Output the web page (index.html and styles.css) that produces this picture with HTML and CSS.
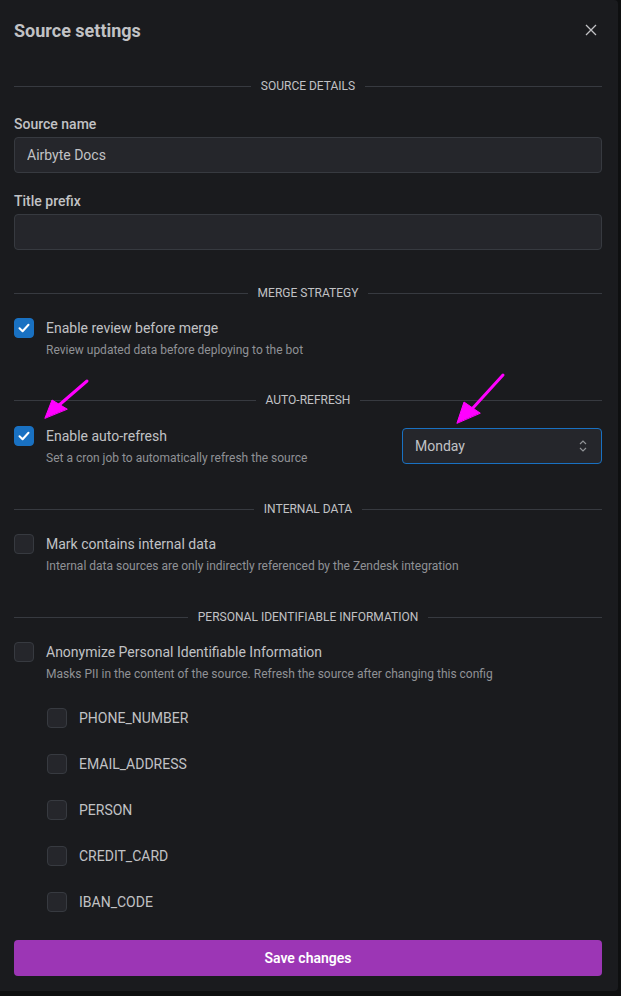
FILE: index.html
```html
<!DOCTYPE html>
<html lang="en">
<head>
    <meta charset="UTF-8">
    <meta name="viewport" content="width=device-width, initial-scale=1.0">
    <title>Source settings</title>
    <link rel="stylesheet" href="styles.css">
</head>
<body>
    <div class="modal">
        <div class="modal-header">
            <h2 class="modal-title">Source settings</h2>
            <button class="close-btn" aria-label="Close">
                <svg width="12" height="12" viewBox="0 0 12 12"><path d="M1 1L11 11M11 1L1 11" stroke="#c1c2c5" stroke-width="1.3" fill="none"/></svg>
            </button>
        </div>

        <div class="divider">Source details</div>

        <div class="field">
            <label class="field-label" for="source-name">Source name</label>
            <input class="text-input" id="source-name" type="text" value="Airbyte Docs">
        </div>
        <div class="field">
            <label class="field-label" for="title-prefix">Title prefix</label>
            <input class="text-input" id="title-prefix" type="text" value="">
        </div>

        <div class="divider section">Merge strategy</div>
        <div class="check-row">
            <span class="checkbox checked">
                <svg width="12" height="10" viewBox="0 0 12 10"><path d="M1.5 5.2L4.6 8.2L10.5 1.8" stroke="#fff" stroke-width="2" fill="none" stroke-linecap="round" stroke-linejoin="round"/></svg>
            </span>
            <div class="check-text">
                <div class="check-label">Enable review before merge</div>
                <div class="check-desc">Review updated data before deploying to the bot</div>
            </div>
        </div>

        <div class="divider section tight">Auto-refresh</div>
        <div class="check-row spread">
            <div class="check-main">
                <span class="checkbox checked">
                    <svg width="12" height="10" viewBox="0 0 12 10"><path d="M1.5 5.2L4.6 8.2L10.5 1.8" stroke="#fff" stroke-width="2" fill="none" stroke-linecap="round" stroke-linejoin="round"/></svg>
                </span>
                <div class="check-text">
                    <div class="check-label">Enable auto-refresh</div>
                    <div class="check-desc">Set a cron job to automatically refresh the source</div>
                </div>
            </div>
            <div class="select">
                <span>Monday</span>
                <svg width="8" height="14" viewBox="0 0 8 14"><path d="M1 5L4 2L7 5M1 9L4 12L7 9" stroke="#909296" stroke-width="1.2" fill="none"/></svg>
            </div>
        </div>

        <div class="divider section">Internal data</div>
        <div class="check-row">
            <span class="checkbox"></span>
            <div class="check-text">
                <div class="check-label">Mark contains internal data</div>
                <div class="check-desc">Internal data sources are only indirectly referenced by the Zendesk integration</div>
            </div>
        </div>

        <div class="divider section">Personal identifiable information</div>
        <div class="check-row">
            <span class="checkbox"></span>
            <div class="check-text">
                <div class="check-label">Anonymize Personal Identifiable Information</div>
                <div class="check-desc">Masks PII in the content of the source. Refresh the source after changing this config</div>
            </div>
        </div>

        <div class="pii-list">
            <div class="pii-item"><span class="checkbox"></span>PHONE_NUMBER</div>
            <div class="pii-item"><span class="checkbox"></span>EMAIL_ADDRESS</div>
            <div class="pii-item"><span class="checkbox"></span>PERSON</div>
            <div class="pii-item"><span class="checkbox"></span>CREDIT_CARD</div>
            <div class="pii-item"><span class="checkbox"></span>IBAN_CODE</div>
        </div>

        <button class="save-btn">Save changes</button>
    </div>

    <!-- annotation arrows drawn over the screenshot -->
    <svg class="annotations" width="621" height="996" viewBox="0 0 621 996">
        <g stroke="#ff00ff" stroke-width="3" fill="#ff00ff" stroke-linecap="round">
            <line x1="87" y1="381" x2="58" y2="406"/>
            <polygon points="45,418 52,400 67,409" stroke-width="1"/>
            <line x1="503" y1="375" x2="472" y2="409"/>
            <polygon points="457,423 464,402 480,413" stroke-width="1"/>
        </g>
    </svg>
</body>
</html>
```

FILE: styles.css
```css
* {
    box-sizing: border-box;
}
body {
    margin: 0;
    background-color: #0e0f10;
    font-family: Roboto, "Liberation Sans", sans-serif;
    color: #c1c2c5;
    position: relative;
}
.modal {
    width: 618px;
    min-height: 991px;
    background-color: #1a1b1e;
    border-radius: 0 4px 4px 0;
    padding: 0 16px 15px 14px;
}
.modal-header {
    height: 60px;
    display: flex;
    align-items: center;
    justify-content: space-between;
}
.modal-title {
    margin: 0;
    font-size: 18px;
    font-weight: 700;
    color: #c1c2c5;
}
.close-btn {
    background: none;
    border: none;
    padding: 0;
    width: 20px;
    height: 20px;
    display: flex;
    align-items: center;
    justify-content: center;
    margin-right: 1px;
    cursor: pointer;
}
.divider {
    display: flex;
    align-items: center;
    gap: 10px;
    margin-top: 18px;
    font-size: 12px;
    line-height: 16px;
    text-transform: uppercase;
    color: #c1c2c5;
}
.divider::before,
.divider::after {
    content: "";
    flex: 1;
    border-top: 1px solid #373a40;
}
.divider.section {
    margin-top: 35px;
}
.divider.section.tight {
    margin-top: 34px;
}
.field {
    margin-top: 20px;
}
.field + .field {
    margin-top: 18px;
}
.field-label {
    display: block;
    font-size: 14px;
    line-height: 20px;
    font-weight: 500;
    color: #c1c2c5;
    margin-bottom: 3px;
}
.text-input {
    display: block;
    width: 100%;
    height: 36px;
    background-color: #25262b;
    border: 1px solid #373a40;
    border-radius: 4px;
    padding: 0 12px;
    font-family: inherit;
    font-size: 14px;
    color: #c1c2c5;
    outline: none;
}
.check-row {
    display: flex;
    align-items: flex-start;
    gap: 12px;
    margin-top: 17px;
}
.check-row.spread {
    justify-content: space-between;
    align-items: center;
    margin-top: 18px;
}
.check-main {
    display: flex;
    align-items: flex-start;
    gap: 12px;
}
.checkbox {
    flex: none;
    width: 20px;
    height: 20px;
    border-radius: 4px;
    background-color: #25262b;
    border: 1px solid #373a40;
    display: flex;
    align-items: center;
    justify-content: center;
}
.checkbox.checked {
    background-color: #1971c2;
    border-color: #1971c2;
}
.check-label {
    font-size: 14px;
    line-height: 20px;
    color: #c1c2c5;
}
.check-desc {
    margin-top: 4px;
    font-size: 12px;
    line-height: 16px;
    color: #909296;
}
.select {
    width: 200px;
    height: 36px;
    background-color: #25262b;
    border: 1px solid #1971c2;
    border-radius: 4px;
    display: flex;
    align-items: center;
    justify-content: space-between;
    padding: 0 14px 0 12px;
    font-size: 14px;
    color: #c1c2c5;
}
.pii-list {
    display: flex;
    flex-direction: column;
    gap: 26px;
    margin-top: 26px;
    padding-left: 33px;
}
.pii-item {
    display: flex;
    align-items: center;
    gap: 12px;
    font-size: 14px;
    line-height: 20px;
    color: #c1c2c5;
}
.save-btn {
    display: block;
    width: 100%;
    height: 36px;
    margin-top: 28px;
    border: none;
    border-radius: 4px;
    background-color: #9c36b5;
    color: #fff;
    font-family: inherit;
    font-size: 14px;
    font-weight: 600;
    cursor: pointer;
}
.annotations {
    position: absolute;
    top: 0;
    left: 0;
    pointer-events: none;
}
```
